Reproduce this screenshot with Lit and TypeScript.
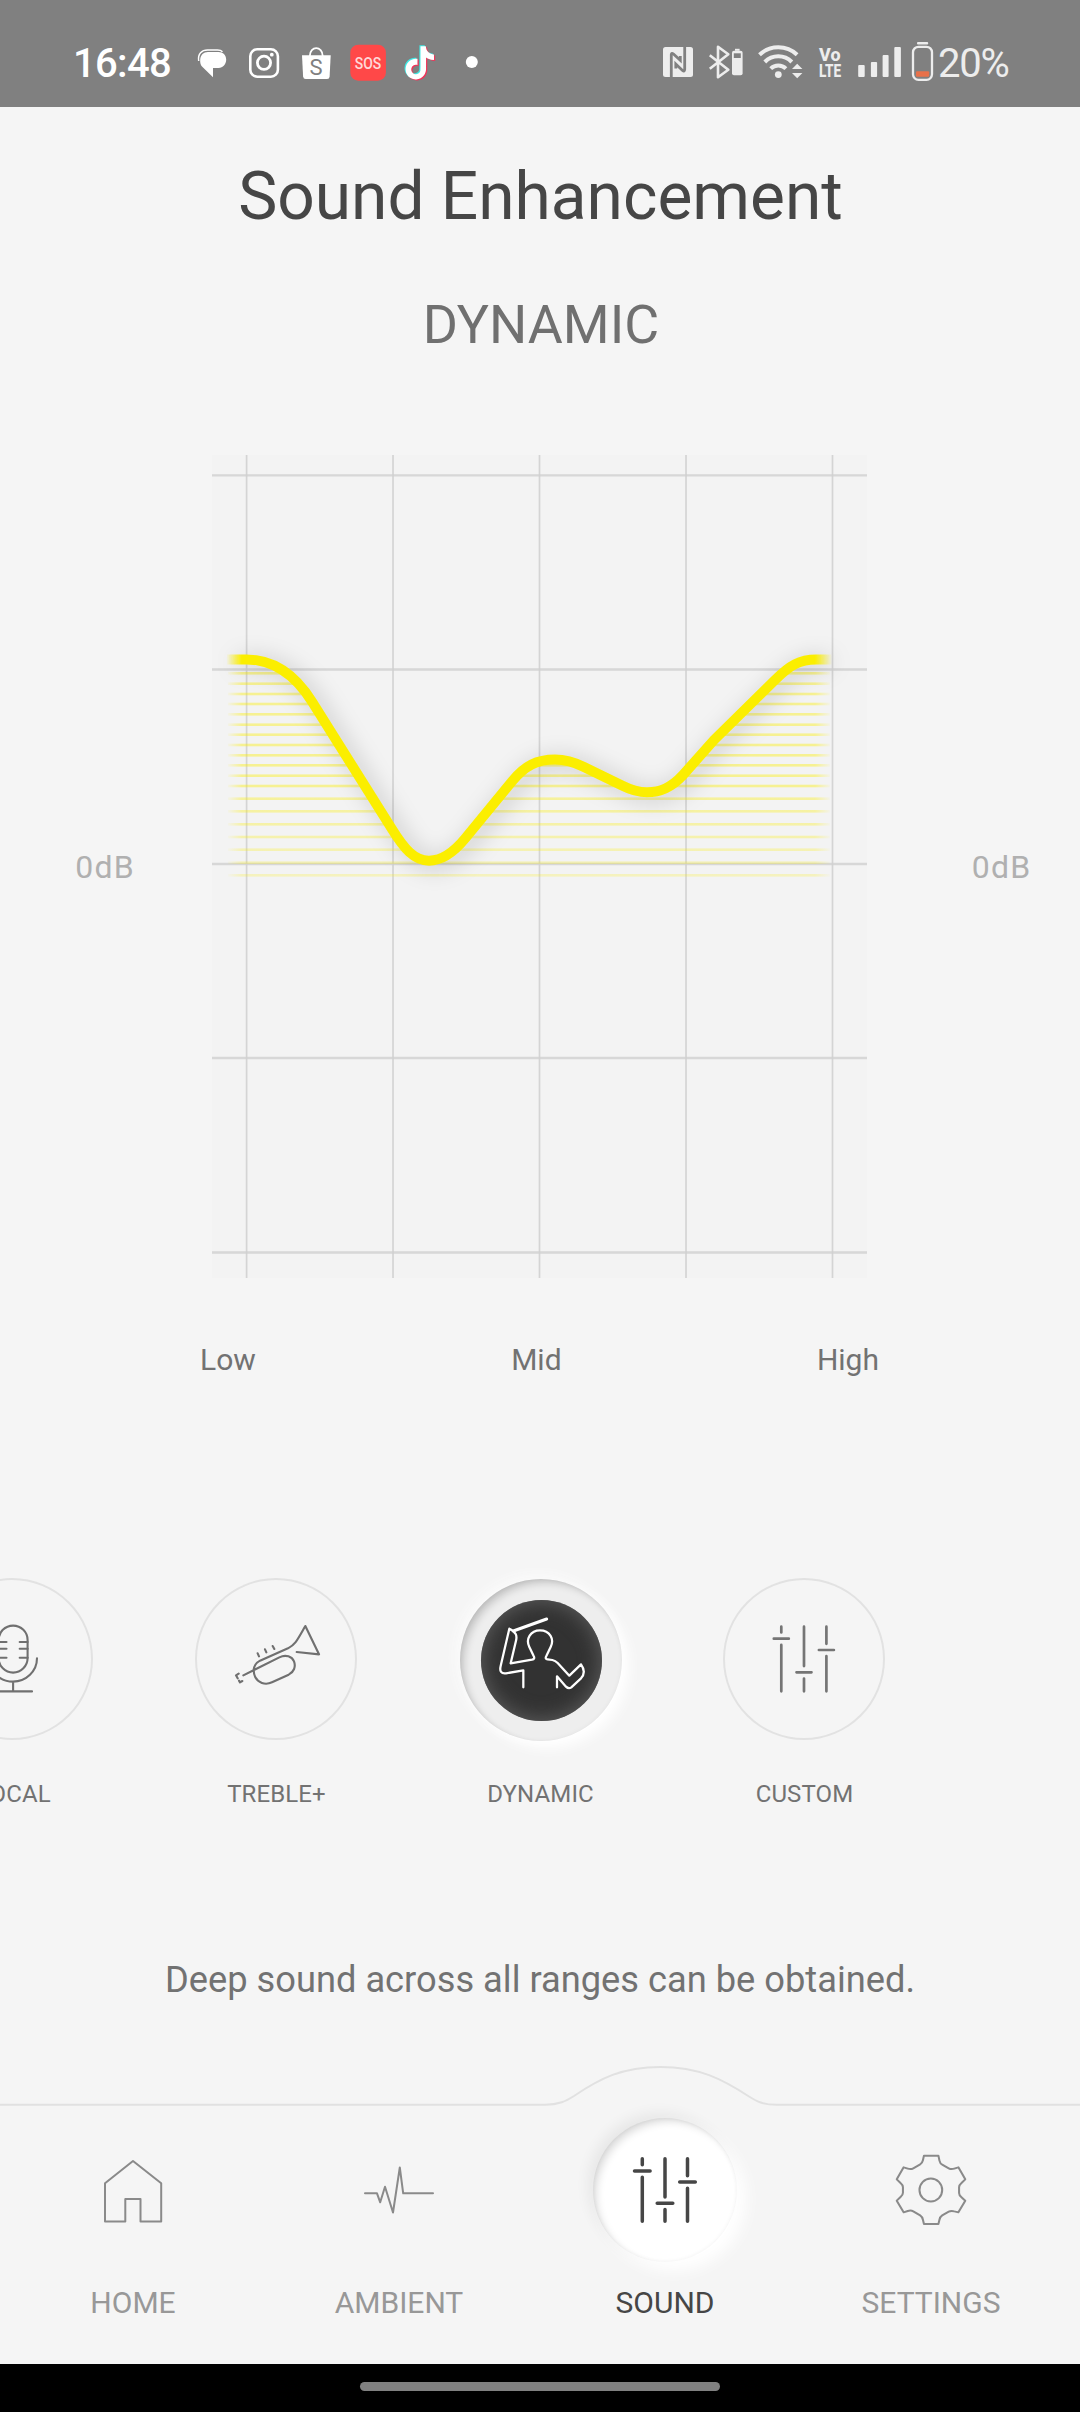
import { LitElement, html, svg, css, nothing } from "lit";
import { customElement, property } from "lit/decorators.js";

const TIKTOK =
  "M12.525.02c1.31-.02 2.61-.01 3.91-.02.08 1.53.63 3.09 1.75 4.17 1.12 1.11 2.7 1.62 4.24 1.79v4.03c-1.44-.05-2.89-.35-4.2-.97-.57-.26-1.1-.59-1.62-.93-.01 2.92.01 5.84-.02 8.75-.08 1.4-.54 2.79-1.35 3.94-1.31 1.92-3.58 3.17-5.91 3.21-1.43.08-2.86-.31-4.08-1.03-2.02-1.19-3.44-3.37-3.65-5.71-.02-.5-.03-1-.01-1.49.18-1.9 1.12-3.72 2.58-4.96 1.66-1.44 3.98-2.13 6.15-1.72.02 1.48-.04 2.96-.04 4.44-.99-.32-2.15-.23-3.02.37-.63.41-1.11 1.04-1.36 1.75-.21.51-.15 1.07-.14 1.61.24 1.64 1.82 3.02 3.5 2.87 1.12-.01 2.19-.66 2.77-1.61.19-.33.4-.67.41-1.06.1-1.79.06-3.57.07-5.36.01-4.03-.01-8.05.02-12.07z";

@customElement("status-bar")
class StatusBar extends LitElement {
  static styles = css`
    :host {
      display: flex;
      justify-content: space-between;
      height: 107px;
      box-sizing: border-box;
      padding: 38px 69px 0 73px;
      background: #808080;
      font-family: Roboto, sans-serif;
      color: #fff;
    }
    .side {
      display: flex;
      height: 48px;
      align-items: center;
    }
    svg {
      display: block;
      flex: none;
    }
    .time {
      font-size: 40px;
      font-weight: 500;
      letter-spacing: -0.7px;
      line-height: 48px;
      padding-top: 3px;
      width: 117px;
    }
    .right {
      color: #ededed;
    }
    .pct {
      width: 73px;
      font-size: 40px;
      font-weight: 450;
      letter-spacing: -1.2px;
      line-height: 48px;
      padding-top: 3px;
      white-space: nowrap;
    }
    .narrow {
      font: 500 16.5px Roboto, sans-serif;
    }
    .volte {
      font: 800 19px Roboto, sans-serif;
    }
    .bag {
      font: 400 22px Roboto, sans-serif;
    }
  `;
  render() {
    return html`
      <div class="side">
        <div class="time">16:48</div>
        <svg width="290" height="48" viewBox="190 38 290 48">
          <path fill="#fff" d="M208 52H218.500C223 52 226.200 55 226.200 59.500S223 68 218.500 68H213V77.200L202 66.500C200.500 65 200 62.500 200.200 59.500C200.500 55 203.500 52 208 52Z" />
          <path fill="none" stroke="#fff" stroke-width="1.500" d="M198.700 61C197.500 53.500 202 50 207.500 50H217.500C220 50 221.300 50.500 222.500 51.700" />
          <rect x="250.300" y="49.300" width="27.600" height="27.400" rx="7" fill="none" stroke="#fff" stroke-width="2.600" />
          <circle cx="264" cy="62.800" r="6.600" fill="none" stroke="#fff" stroke-width="2.800" />
          <circle cx="271.800" cy="54.700" r="1.900" fill="#fff" />
          <path fill="#fff" d="M302 55.300H330.700L329.600 76.500Q329.400 79 327 79H305.700Q303.300 79 303.100 76.500Z" />
          <path fill="none" stroke="#fff" stroke-width="1.800" d="M309.800 56C310 45.500 322.500 45.500 322.700 56" />
          <text class="bag" x="309.600" y="75" fill="#808080">S</text>
          <rect x="350.300" y="44.700" width="35.600" height="36" rx="8" fill="#ff4848" />
          <text class="narrow" x="354.800" y="69" fill="#ffd8d8" textLength="26.500" lengthAdjust="spacingAndGlyphs">SOS</text>
          <g transform="translate(403.200 46.200) scale(1.360 1.390)">
            <path fill="#3fe8e4" transform="translate(-.6 -.7)" d=${TIKTOK} />
            <path fill="#f0355a" transform="translate(1.100 .7)" d=${TIKTOK} />
            <path fill="#fff" transform="translate(.2 0)" d=${TIKTOK} />
          </g>
          <circle cx="471.800" cy="62" r="6" fill="#fff" />
        </svg>
      </div>
      <div class="side right">
        <svg width="278" height="48" viewBox="660 38 278 48" fill="none">
          <rect x="663" y="47" width="30" height="30" rx="2.500" fill="#ededed" />
          <path stroke="#808080" stroke-width="2.800" d="M671.300 77V54.500Q671.500 52.500 673.500 54L680.300 60.300V56M684.700 47V69.500Q684.500 72 682.500 70.500L675.800 64V68.500" />
          <path stroke="#ededed" stroke-width="2.600" stroke-linejoin="round" d="M709.800 55.300L728.300 69.800L718 77.200V46.800L728.300 54.200L709.800 68.800" />
          <rect x="732" y="50.700" width="10.600" height="24.500" rx="2" fill="#ededed" />
          <rect x="735" y="48.800" width="4.600" height="2" fill="#ededed" />
          <rect x="733.800" y="53.300" width="7" height="4.700" fill="#808080" />
          <g stroke="#ededed" stroke-width="4">
            <path d="M759.500 54.800A27.500 27.500 0 0 1 797.100 54.800" />
            <path d="M764.800 62A18.800 18.800 0 0 1 791.800 62" />
            <path d="M770.700 68.600A10.800 10.800 0 0 1 785.900 68.600" />
          </g>
          <circle cx="778.300" cy="74.600" r="3.400" fill="#ededed" />
          <path fill="#ededed" d="M792 69L797.200 63.700L802.400 69ZM792 73L797.200 78.300L802.400 73Z" />
          <text class="volte" x="819" y="61" fill="#ededed" textLength="21.500" lengthAdjust="spacingAndGlyphs">Vo</text>
          <text class="volte" x="819" y="76.800" fill="#ededed" textLength="22" lengthAdjust="spacingAndGlyphs">LTE</text>
          <g fill="#ededed">
            <rect x="858.200" y="65" width="6.500" height="12" rx="1" />
            <rect x="870.900" y="62" width="6.200" height="15" rx="1" />
            <rect x="882.600" y="55" width="6" height="22" rx="1" />
            <rect x="894.300" y="47" width="6.600" height="30" rx="1" />
            <rect x="917" y="42" width="11.200" height="2.400" rx="1" />
            <rect x="916" y="71.300" width="13.200" height="5.400" rx="1" fill="#e8714a" />
          </g>
          <rect x="913" y="46.800" width="19" height="33" rx="5.500" stroke="#ededed" stroke-width="2.300" />
        </svg>
        <div class="pct">20%</div>
      </div>
    `;
  }
}

const COLUMNS = [246.6, 393, 539.5, 686, 832.5];
const ROWS = [475.3, 669.5, 864, 1058, 1252.5];
const STRIPES = [
  673.3, 683.7, 694, 704, 714.3, 724.7, 734.7, 745, 755.3, 765.3, 775.7, 786,
  798.7, 811.3, 824.3, 837, 849.7, 862.7, 875.3,
];
const CURVE =
  "M227 659.500H246.600C268 659.500 292 669.700 312 701.600L392 829.200C404 848.500 414 860.700 429 860.700C442 860.700 453 853.300 465 838.700L512 781.300C525 765.500 537 759.500 555 759.500C566 759.500 574 762 584 767L622 785.500C633 791 640 792.300 647 792.300C660 792.300 671 788 683 775L714 740L775 680C790 665 800 659.500 816 659.500H832";

@customElement("eq-chart")
class EqChart extends LitElement {
  static styles = css`
    :host {
      display: block;
      width: 655px;
      height: 823px;
    }
    svg {
      display: block;
    }
    .curve {
      filter: drop-shadow(5px 3px 11px rgba(0, 0, 0, 0.21));
    }
  `;
  render() {
    return html`<svg width="655" height="823" viewBox="212 455 655 823">
      <defs>
        <linearGradient id="fade" gradientUnits="userSpaceOnUse" x1="226" x2="832" y1="0" y2="0">
          <stop offset="0" stop-color="#fbee00" stop-opacity="0" />
          <stop offset=".026" stop-color="#fbee00" />
          <stop offset=".972" stop-color="#fbee00" />
          <stop offset="1" stop-color="#fbee00" stop-opacity="0" />
        </linearGradient>
        <clipPath id="under"><path d="${CURVE}V890H227Z" /></clipPath>
      </defs>
      <rect x="212" y="455" width="655" height="823" fill="#f3f3f3" />
      <g stroke="#d4d4d4" stroke-width="1.700">
        ${COLUMNS.map((x) => svg`<line x1=${x} x2=${x} y1="455" y2="1278" />`)}
      </g>
      <g stroke="#cfcfcf" stroke-opacity=".8" stroke-width="2.300">
        ${ROWS.map((y) => svg`<line x1="212" x2="867" y1=${y} y2=${y} />`)}
      </g>
      <g clip-path="url(#under)">
        ${STRIPES.map(
          (y, i) => svg`<rect x="228" width="602" y=${y - 1.3} height="2.600" fill="url(#fade)" opacity=${i < 12 ? 0.4 : 0.38 - (i - 11) * 0.023} />`
        )}
      </g>
      <path class="curve" d=${CURVE} fill="none" stroke="url(#fade)" stroke-width="10" stroke-linejoin="round" />
    </svg>`;
  }
}

const sliders = (c: number[], y0: number, y1: number, bars: number[], half: number, gap: number) => svg`
  ${c.map((x, i) => svg`<path d="M${x} ${y0}V${bars[i] - gap}M${x - half} ${bars[i]}H${x + half}M${x} ${bars[i] + gap}V${y1}" />`)}
`;

const PRESETS = [
  {
    label: "VOCAL",
    icon: svg`<g transform="translate(-69 1578)">
      <rect x="67.600" y="47.600" width="29" height="47" rx="14.500" />
      <path d="M67.600 64H75.500M67.600 70.700H75.500M67.600 79.700H75.500M88.700 64H96.600M88.700 70.700H96.600M88.700 79.700H96.600M58 80.300A24 23.300 0 0 0 106 80.300M82.100 103.500V113.400M63 113.400H101" />
    </g>`,
    x: -69,
  },
  {
    label: "TREBLE+",
    icon: svg`<g transform="translate(180 1560) scale(.33333)" stroke-width="6.400">
      <path d="M190 346L298 292C318 282 336 290 342 304C348 320 342 336 326 344L276 367C254 377 234 367 226 352C216 330 222 311 240 302L324 265C346 254 352 240 376 198L417 283L350 276M233 280L237 289M255 268L259 277M278 258L283 267M176 341L168 346L173 355M177 362L180 367L187 363" />
    </g>`,
    x: 195,
  },
  {
    label: "DYNAMIC",
    active: true,
    icon: svg`<g transform="translate(179 1559) scale(.33333)" stroke="#fff" stroke-width="6.800">
      <path stroke-width="9" d="M1100 177L1000 213" />
      <path d="M1030 382V331L978 340C964 342 958 334 962 318L988 206C1008 216 1012 226 1008 242L992 310L1056 299Q1066 297 1061 288L1048 261C1036 236 1052 211 1080 211C1109 211 1124 236 1112 261L1099 288Q1094 297 1103 298L1117 300Q1126 302 1133 309L1168 347L1203 313C1216 331 1212 345 1203 355L1174 382Q1166 388 1158 380L1131 349V382" />
    </g>`,
    x: 459,
  },
  {
    label: "CUSTOM",
    icon: svg`<g stroke="#757575" stroke-width="2.700">${sliders([781.3, 804, 826.4], 1626.7, 1691.3, [1638.7, 1672.3, 1650], 7.5, 6.2)}</g>`,
    x: 723,
  },
];

const TABS = [
  {
    label: "HOME",
    x: 61,
    icon: svg`<path d="M105 2183.300L133 2161L161.200 2183.300V2221.600H140.500V2199H125.300V2221.600H105Z" />`,
  },
  {
    label: "AMBIENT",
    x: 327,
    icon: svg`<path d="M365 2193.300H377L380.200 2202.300L385 2186.700L393 2212.500L399.800 2167.500L403.200 2193.300H433" />`,
  },
  {
    label: "SOUND",
    x: 593,
    active: true,
    icon: svg`<g stroke="#464646" stroke-width="3.500">${sliders([642.3, 665, 687.5], 2158.7, 2221.3, [2171, 2203.3, 2182], 7.8, 6.2)}</g>`,
  },
  {
    label: "SETTINGS",
    x: 859,
    icon: svg`<g transform="translate(540 2040) scale(.34435 .33333)" stroke-width="5.900">
      <path d="M1115 347H1157L1160 362Q1162 371 1168 374L1187 385Q1194 389 1203 386L1215 382L1235 418L1224 429Q1217 435 1217 442V459Q1217 466 1224 472L1235 482L1215 517L1203 514Q1194 511 1187 515L1168 526Q1162 530 1160 539L1157 552H1115L1112 539Q1110 530 1104 526L1084 514Q1077 510 1068 513L1056 517L1036 482L1047 471Q1054 465 1054 458V442Q1054 435 1047 429L1036 418L1056 382L1068 386Q1077 389 1084 385L1104 373Q1110 370 1112 361Z" />
      <ellipse cx="1135" cy="450" rx="33" ry="34.500" />
    </g>`,
  },
];

@customElement("preset-item")
class PresetItem extends LitElement {
  @property({ attribute: false }) item: any;
  static styles = css`
    :host {
      display: flex;
      flex-direction: column;
      align-items: center;
      width: 264px;
      flex: none;
      font-family: Roboto, sans-serif;
    }
    .ring {
      width: 162px;
      height: 162px;
      border-radius: 50%;
      box-shadow: inset 0 0 0 2px #e2e2e2;
      display: grid;
      place-items: center;
    }
    svg {
      grid-area: 1 / 1;
      display: block;
      fill: none;
      stroke: #707070;
      stroke-width: 2.1;
      stroke-linecap: round;
      stroke-linejoin: round;
    }
    .on {
      transform: translate(1px, 1px);
      background: #eee;
      box-shadow: inset 5px 5px 8px -2px rgba(0, 0, 0, 0.2),
        inset 0 0 5px rgba(0, 0, 0, 0.05), 7px 7px 14px #fff, -3px -3px 14px #fcfcfc;
    }
    .disc {
      grid-area: 1 / 1;
      width: 121px;
      height: 121px;
      border-radius: 50%;
      background: #323232;
      box-shadow: inset 0 0 20px 1px #5e5e5e;
    }
    .label {
      margin-top: 39px;
      padding-left: 1px;
      font-size: 24px;
      letter-spacing: 0.12px;
      line-height: 30px;
      color: #727272;
    }
  `;
  render() {
    const { item } = this;
    return html`<div class="ring ${item.active ? "on" : ""}">
        ${item.active ? html`<div class="disc"></div>` : nothing}
        <svg width="162" height="162" viewBox="${item.x} 1578 162 162">${item.icon}</svg>
      </div>
      <div class="label">${item.label}</div>`;
  }
}

@customElement("tab-bar")
class TabBar extends LitElement {
  static styles = css`
    :host {
      display: block;
      position: relative;
      height: 304px;
      font-family: Roboto, sans-serif;
    }
    .edge {
      position: absolute;
      left: 0;
      top: 0;
      fill: none;
      stroke: #e1e1e1;
      stroke-width: 2;
    }
    .tabs {
      position: relative;
      display: flex;
      padding-top: 58px;
    }
    .tab {
      width: 266px;
      display: flex;
      flex-direction: column;
      align-items: center;
      color: #989898;
    }
    .icon {
      width: 144px;
      height: 144px;
      border-radius: 50%;
    }
    .icon svg {
      display: block;
      fill: none;
      stroke: #8a8a8a;
      stroke-width: 2;
      stroke-linecap: round;
      stroke-linejoin: round;
    }
    .label {
      margin-top: 23px;
      font-size: 30px;
      line-height: 36px;
    }
    .active {
      color: #464646;
    }
    .active .icon {
      background: #fff;
      box-shadow: inset 5px 5px 8px -2px rgba(0, 0, 0, 0.15),
        inset 0 0 4px rgba(0, 0, 0, 0.06), 9px 9px 16px #fff,
        -5px -5px 14px rgba(0, 0, 0, 0.06);
    }
  `;
  render() {
    return html`
      <svg class="edge" width="1080" height="60" viewBox="0 2060 1080 60">
        <path d="M0 2104.800H545C559 2104.800 566 2101 574 2096C600 2078.500 622 2067 660.500 2067C699 2067 722 2079 749 2096.500C757 2101.500 763 2104.800 777 2104.800H1080" />
      </svg>
      <div class="tabs">
        ${TABS.map(
          (t) => html`<div class="tab ${t.active ? "active" : ""}">
            <div class="icon"><svg width="144" height="144" viewBox="${t.x} 2118 144 144">${t.icon}</svg></div>
            <div class="label">${t.label}</div>
          </div>`
        )}
      </div>
    `;
  }
}

@customElement("app-root")
class AppRoot extends LitElement {
  static styles = css`
    :host {
      display: flex;
      flex-direction: column;
      width: 1080px;
      height: 2412px;
      overflow: hidden;
      background: #f5f5f5;
      font-family: Roboto, sans-serif;
      color: #727272;
    }
    .title {
      margin-top: 50px;
      padding-left: 1px;
      font-size: 65.8px;
      line-height: 80px;
      text-align: center;
      color: #464646;
    }
    .mode {
      margin-top: 58px;
      padding-left: 2px;
      font-size: 53.7px;
      line-height: 60px;
      text-align: center;
      color: #707070;
    }
    .chart {
      margin-top: 100px;
      display: grid;
      grid-template-columns: 212px 655px 213px;
      align-items: center;
      text-align: center;
      font-size: 32px;
      letter-spacing: 1.2px;
      color: #b0b0b0;
    }
    .left {
      padding-right: 2px;
    }
    .right {
      padding-left: 56px;
    }
    .axis {
      margin: 64px 201px 0 200px;
      display: flex;
      justify-content: space-between;
      font-size: 30px;
      line-height: 36px;
    }
    .presets {
      margin: 200px 0 0 -120px;
      display: flex;
    }
    .about {
      margin-top: 149px;
      margin-bottom: 58px;
      font-size: 36.25px;
      line-height: 44px;
      text-align: center;
    }
    .home {
      height: 48px;
      background: #000;
      display: flex;
      justify-content: center;
      padding-top: 18px;
      box-sizing: border-box;
    }
    .pill {
      width: 360px;
      height: 9px;
      border-radius: 5px;
      background: #808080;
    }
  `;
  render() {
    return html`
      <status-bar></status-bar>
      <div class="title">Sound Enhancement</div>
      <div class="mode">DYNAMIC</div>
      <div class="chart">
        <div class="left">0dB</div>
        <eq-chart></eq-chart>
        <div class="right">0dB</div>
      </div>
      <div class="axis"><span>Low</span><span>Mid</span><span>High</span></div>
      <div class="presets">${PRESETS.map((p) => html`<preset-item .item=${p}></preset-item>`)}</div>
      <div class="about">Deep sound across all ranges can be obtained.</div>
      <tab-bar></tab-bar>
      <div class="home"><div class="pill"></div></div>
    `;
  }
}
